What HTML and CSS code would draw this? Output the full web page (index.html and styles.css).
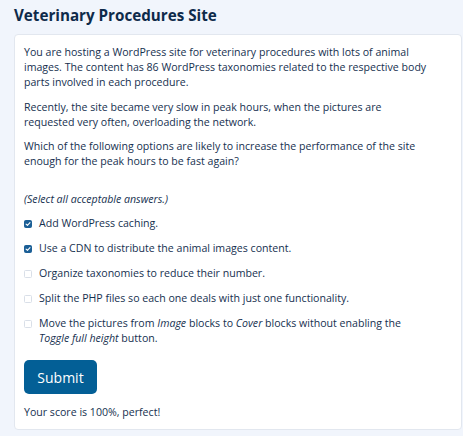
FILE: index.html
```html
<!DOCTYPE html>
<html lang="en">
<head>
<meta charset="utf-8">
<title>Veterinary Procedures Site</title>
<link rel="stylesheet" href="styles.css">
</head>
<body>
<h2 class="title">Veterinary Procedures Site</h2>
<div class="card">
  <p class="para">You are hosting a WordPress site for veterinary procedures with lots of animal images. The content has 86 WordPress taxonomies related to the respective body parts involved in each procedure.</p>
  <p class="para">Recently, the site became very slow in peak hours, when the pictures are requested very often, overloading the network.</p>
  <p class="para">Which of the following options are likely to increase the performance of the site enough for the peak hours to be fast again?</p>
  <p class="hint">(Select all acceptable answers.)</p>
  <ul class="options">
    <li class="option"><span class="box checked"><svg viewBox="0 0 10 10" width="6" height="6"><path d="M1.8 5.3 L4.1 7.4 L8.3 2.8" fill="none" stroke="#fff" stroke-width="1.8" stroke-linecap="round" stroke-linejoin="round"/></svg></span><span class="label">Add WordPress caching.</span></li>
    <li class="option"><span class="box checked"><svg viewBox="0 0 10 10" width="6" height="6"><path d="M1.8 5.3 L4.1 7.4 L8.3 2.8" fill="none" stroke="#fff" stroke-width="1.8" stroke-linecap="round" stroke-linejoin="round"/></svg></span><span class="label">Use a CDN to distribute the animal images content.</span></li>
    <li class="option"><span class="box"></span><span class="label">Organize taxonomies to reduce their number.</span></li>
    <li class="option"><span class="box"></span><span class="label">Split the PHP files so each one deals with just one functionality.</span></li>
    <li class="option"><span class="box"></span><span class="label">Move the pictures from <em>Image</em> blocks to <em>Cover</em> blocks without enabling the <em>Toggle full height</em> button.</span></li>
  </ul>
  <button class="submit" type="button">Submit</button>
  <p class="score">Your score is 100%, perfect!</p>
</div>
</body>
</html>
```
FILE: styles.css
```css
html, body {
  background: #f1f5fc;
}
body {
  margin: 0;
  padding: 0 1px 0 14px;
  font-family: "Open Sans", "Noto Sans", sans-serif;
  color: #16304f;
}
.title {
  margin: 0;
  padding: 4px 0 8px;
  font-size: 15.2px;
  line-height: 22px;
  font-weight: 700;
  color: #0e2a4a;
}
.card {
  background: #fff;
  border: 1px solid #e2e7ef;
  border-radius: 4px;
  padding: 10px 31px 9px 9px;
  font-size: 10.6px;
  line-height: 15px;
}
.para {
  margin: 0 0 9.5px;
}
.hint {
  margin: 23px 0 9px;
  font-style: italic;
}
.options {
  list-style: none;
  margin: 0;
  padding: 0;
}
.option {
  display: flex;
  align-items: flex-start;
  gap: 7px;
  margin-bottom: 10px;
}
.box {
  flex: 0 0 auto;
  box-sizing: border-box;
  width: 8px;
  height: 8px;
  margin-top: 3.5px;
  border: 1px solid #d9dfe8;
  border-radius: 1.5px;
  background: #fff;
  display: flex;
  align-items: center;
  justify-content: center;
}
.box.checked {
  background: #1b5f96;
  border-color: #1b5f96;
}
.label em {
  font-style: italic;
}
.submit {
  display: block;
  margin: 14px 0 11px;
  width: 73px;
  height: 34px;
  border: none;
  border-radius: 5px;
  background: #035f96;
  color: #fff;
  font-family: "Open Sans", "Noto Sans", sans-serif;
  font-size: 14px;
  font-weight: 500;
  padding: 0;
}
.score {
  margin: 0;
}
```
